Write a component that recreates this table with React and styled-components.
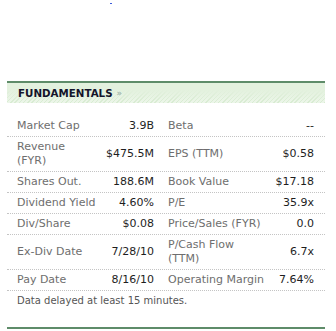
import React from "react";
import styled, { createGlobalStyle } from "styled-components";

const GlobalStyle = createGlobalStyle`
  html, body {
    margin: 0;
    padding: 0;
    background: #fff;
  }
  body {
    font-family: "DejaVu Sans", Verdana, sans-serif;
  }
`;

const Page = styled.div`
  width: 336px;
  height: 331px;
  overflow: hidden;
  padding: 0 11px 0 7px;
  box-sizing: border-box;
`;

const Speck = styled.div`
  width: 2px;
  height: 1px;
  margin: 3px 0 0 103px;
  background: #3b5bdb;
`;

const Panel = styled.section`
  margin-top: 77px;
  border-top: 2px solid #5e8c69;
`;

const Header = styled.h2`
  display: flex;
  align-items: center;
  gap: 4px;
  height: 20px;
  margin: 0;
  padding: 0 0 0 11px;
  font-size: 10.3px;
  font-weight: bold;
  color: #14142a;
  background-color: #e3f1de;
  background-image: linear-gradient(
      to bottom,
      #e3f1de 35%,
      rgba(227, 241, 222, 0) 100%
    ),
    repeating-linear-gradient(
      -45deg,
      #d8ebd2 0 1px,
      #ecf6e9 1px 3px
    );
`;

const Chevron = styled.span`
  font-size: 9px;
  font-weight: normal;
  color: #8fa8a0;
`;

const Table = styled.div`
  margin-top: 13px;
`;

const Row = styled.div`
  display: grid;
  grid-template-columns: 84px 53px 114px 1fr;
  align-items: center;
  padding: 3px 11px 3px 10px;
  border-bottom: 1px dotted #c4c4c4;
  font-size: 11px;
  line-height: 14px;
`;

const Label = styled.div`
  color: #6e6e6e;
  white-space: nowrap;
  padding-left: ${(p) => (p.$second ? "14px" : "0")};
`;

const Value = styled.div`
  color: #1e1e1e;
  text-align: right;
  white-space: nowrap;
`;

const Note = styled.p`
  margin: 0;
  padding: 3px 0 0 10px;
  font-size: 10px;
  line-height: 14px;
  color: #555;
`;

const NextPanel = styled.div`
  margin-top: 19px;
  border-top: 2px solid #5e8c69;
`;

const rows = [
  ["Market Cap", "3.9B", "Beta", "--"],
  [["Revenue", "(FYR)"], "$475.5M", "EPS (TTM)", "$0.58"],
  ["Shares Out.", "188.6M", "Book Value", "$17.18"],
  ["Dividend Yield", "4.60%", "P/E", "35.9x"],
  ["Div/Share", "$0.08", "Price/Sales (FYR)", "0.0"],
  ["Ex-Div Date", "7/28/10", ["P/Cash Flow", "(TTM)"], "6.7x"],
  ["Pay Date", "8/16/10", "Operating Margin", "7.64%"],
];

const renderText = (t) =>
  Array.isArray(t) ? (
    <>
      {t[0]}
      <br />
      {t[1]}
    </>
  ) : (
    t
  );

export default function App() {
  return (
    <>
      <GlobalStyle />
      <Page>
        <Speck />
        <Panel>
          <Header>
            FUNDAMENTALS <Chevron>»</Chevron>
          </Header>
          <Table>
            {rows.map((r, i) => (
              <Row key={i}>
                <Label>{renderText(r[0])}</Label>
                <Value>{r[1]}</Value>
                <Label $second>{renderText(r[2])}</Label>
                <Value>{r[3]}</Value>
              </Row>
            ))}
          </Table>
          <Note>Data delayed at least 15 minutes.</Note>
        </Panel>
        <NextPanel />
      </Page>
    </>
  );
}
